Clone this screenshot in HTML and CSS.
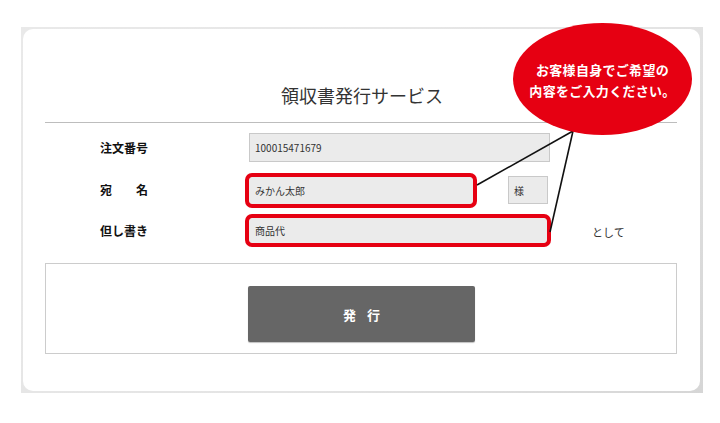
FILE: index.html
```html
<!DOCTYPE html>
<html lang="ja">
<head>
<meta charset="utf-8">
<title>領収書発行サービス</title>
<link rel="stylesheet" href="styles.css">
</head>
<body>
<div class="page">
  <div class="frame">
    <div class="card">
      <h1 class="title">領収書発行サービス</h1>
      <hr class="rule">
      <div class="form">
        <div class="row">
          <div class="label">注文番号</div>
          <div class="field field-order">100015471679</div>
        </div>
        <div class="row">
          <div class="label">宛　　名</div>
          <div class="field field-name hl">みかん太郎</div>
          <div class="suffix">様</div>
        </div>
        <div class="row">
          <div class="label">但し書き</div>
          <div class="field field-note hl">商品代</div>
          <div class="note-after">として</div>
        </div>
      </div>
      <div class="action">
        <button class="issue">発 行</button>
      </div>
    </div>
  </div>
  <svg class="pointers" width="720" height="423" viewBox="0 0 720 423">
    <line x1="573" y1="131" x2="477" y2="185" stroke="#111" stroke-width="1.6"/>
    <line x1="573" y1="131" x2="550" y2="232" stroke="#111" stroke-width="1.6"/>
  </svg>
  <div class="bubble">
    <span>お客様自身でご希望の</span>
    <span>内容をご入力ください。</span>
  </div>
</div>
</body>
</html>
```
FILE: styles.css
```css
html, body {
  margin: 0;
  padding: 0;
  background: #ffffff;
}
body {
  font-family: "Noto Sans CJK JP", "Noto Sans", sans-serif;
  color: #333333;
}
.page {
  position: relative;
  width: 720px;
  height: 423px;
  overflow: hidden;
}
.frame {
  box-sizing: border-box;
  margin: 27px 0 0 21px;
  width: 682px;
  height: 366px;
  padding: 2px 3px 2px 2px;
  background: linear-gradient(135deg, #e9e9e9 0%, #e4e4e4 60%, #d6d6d6 100%);
}
.card {
  box-sizing: border-box;
  height: 362px;
  background: #ffffff;
  border-radius: 10px;
  padding: 53px 23px 0 22px;
}
.title {
  margin: 0;
  height: 26px;
  line-height: 26px;
  font-size: 18px;
  font-weight: 400;
  text-align: center;
  color: #333333;
  padding-left: 2px;
}
.rule {
  margin: 14px 0 0 0;
  border: 0;
  height: 1px;
  background: #bdbdbd;
}
.form {
  display: flex;
  flex-direction: column;
  gap: 14px;
  padding: 10px 0 0 55px;
}
.row {
  display: flex;
  align-items: center;
}
.label {
  width: 149px;
  flex: none;
  font-size: 12px;
  font-weight: 700;
  color: #111111;
  line-height: 16px;
}
.field {
  box-sizing: border-box;
  flex: none;
  background: #ebebeb;
  border: 1px solid #c9c9c9;
  font-size: 10px;
  color: #333333;
  padding-left: 5px;
  display: flex;
  align-items: center;
}
.field-order {
  width: 301px;
  height: 29px;
}
.field-name {
  width: 224px;
  height: 27px;
}
.field-note {
  width: 298px;
  height: 25px;
}
.hl {
  border: 1px solid #ebebeb;
  border-radius: 3px;
  box-shadow: 0 0 0 4px #e60012;
}
.suffix {
  box-sizing: border-box;
  margin-left: 35px;
  width: 40px;
  height: 28px;
  background: #ebebeb;
  border: 1px solid #c9c9c9;
  font-size: 10px;
  padding-left: 5px;
  display: flex;
  align-items: center;
}
.note-after {
  margin-left: 45px;
  font-size: 11px;
  color: #333333;
  padding-top: 2px;
}
.action {
  box-sizing: border-box;
  margin-top: 20px;
  height: 91px;
  border: 1px solid #cccccc;
  display: flex;
  justify-content: center;
  align-items: flex-start;
  padding-top: 22px;
}
.issue {
  width: 227px;
  height: 56px;
  border: 0;
  border-radius: 2px;
  background: #666666;
  box-shadow: 0 1px 1px rgba(0,0,0,0.25);
  color: #ffffff;
  font-family: "Noto Sans CJK JP", sans-serif;
  font-size: 13px;
  font-weight: 700;
  letter-spacing: 4px;
  padding: 0 0 0 4px;
  margin-left: 1px;
}
.pointers {
  position: absolute;
  left: 0;
  top: 0;
  pointer-events: none;
}
.bubble {
  position: absolute;
  left: 513px;
  top: 23px;
  width: 179px;
  height: 112px;
  border-radius: 50%;
  background: #e60012;
  color: #ffffff;
  font-size: 13px;
  font-weight: 700;
  line-height: 21px;
  letter-spacing: 0.3px;
  display: flex;
  flex-direction: column;
  align-items: center;
  justify-content: center;
  padding-top: 1px;
  box-sizing: border-box;
}
```
